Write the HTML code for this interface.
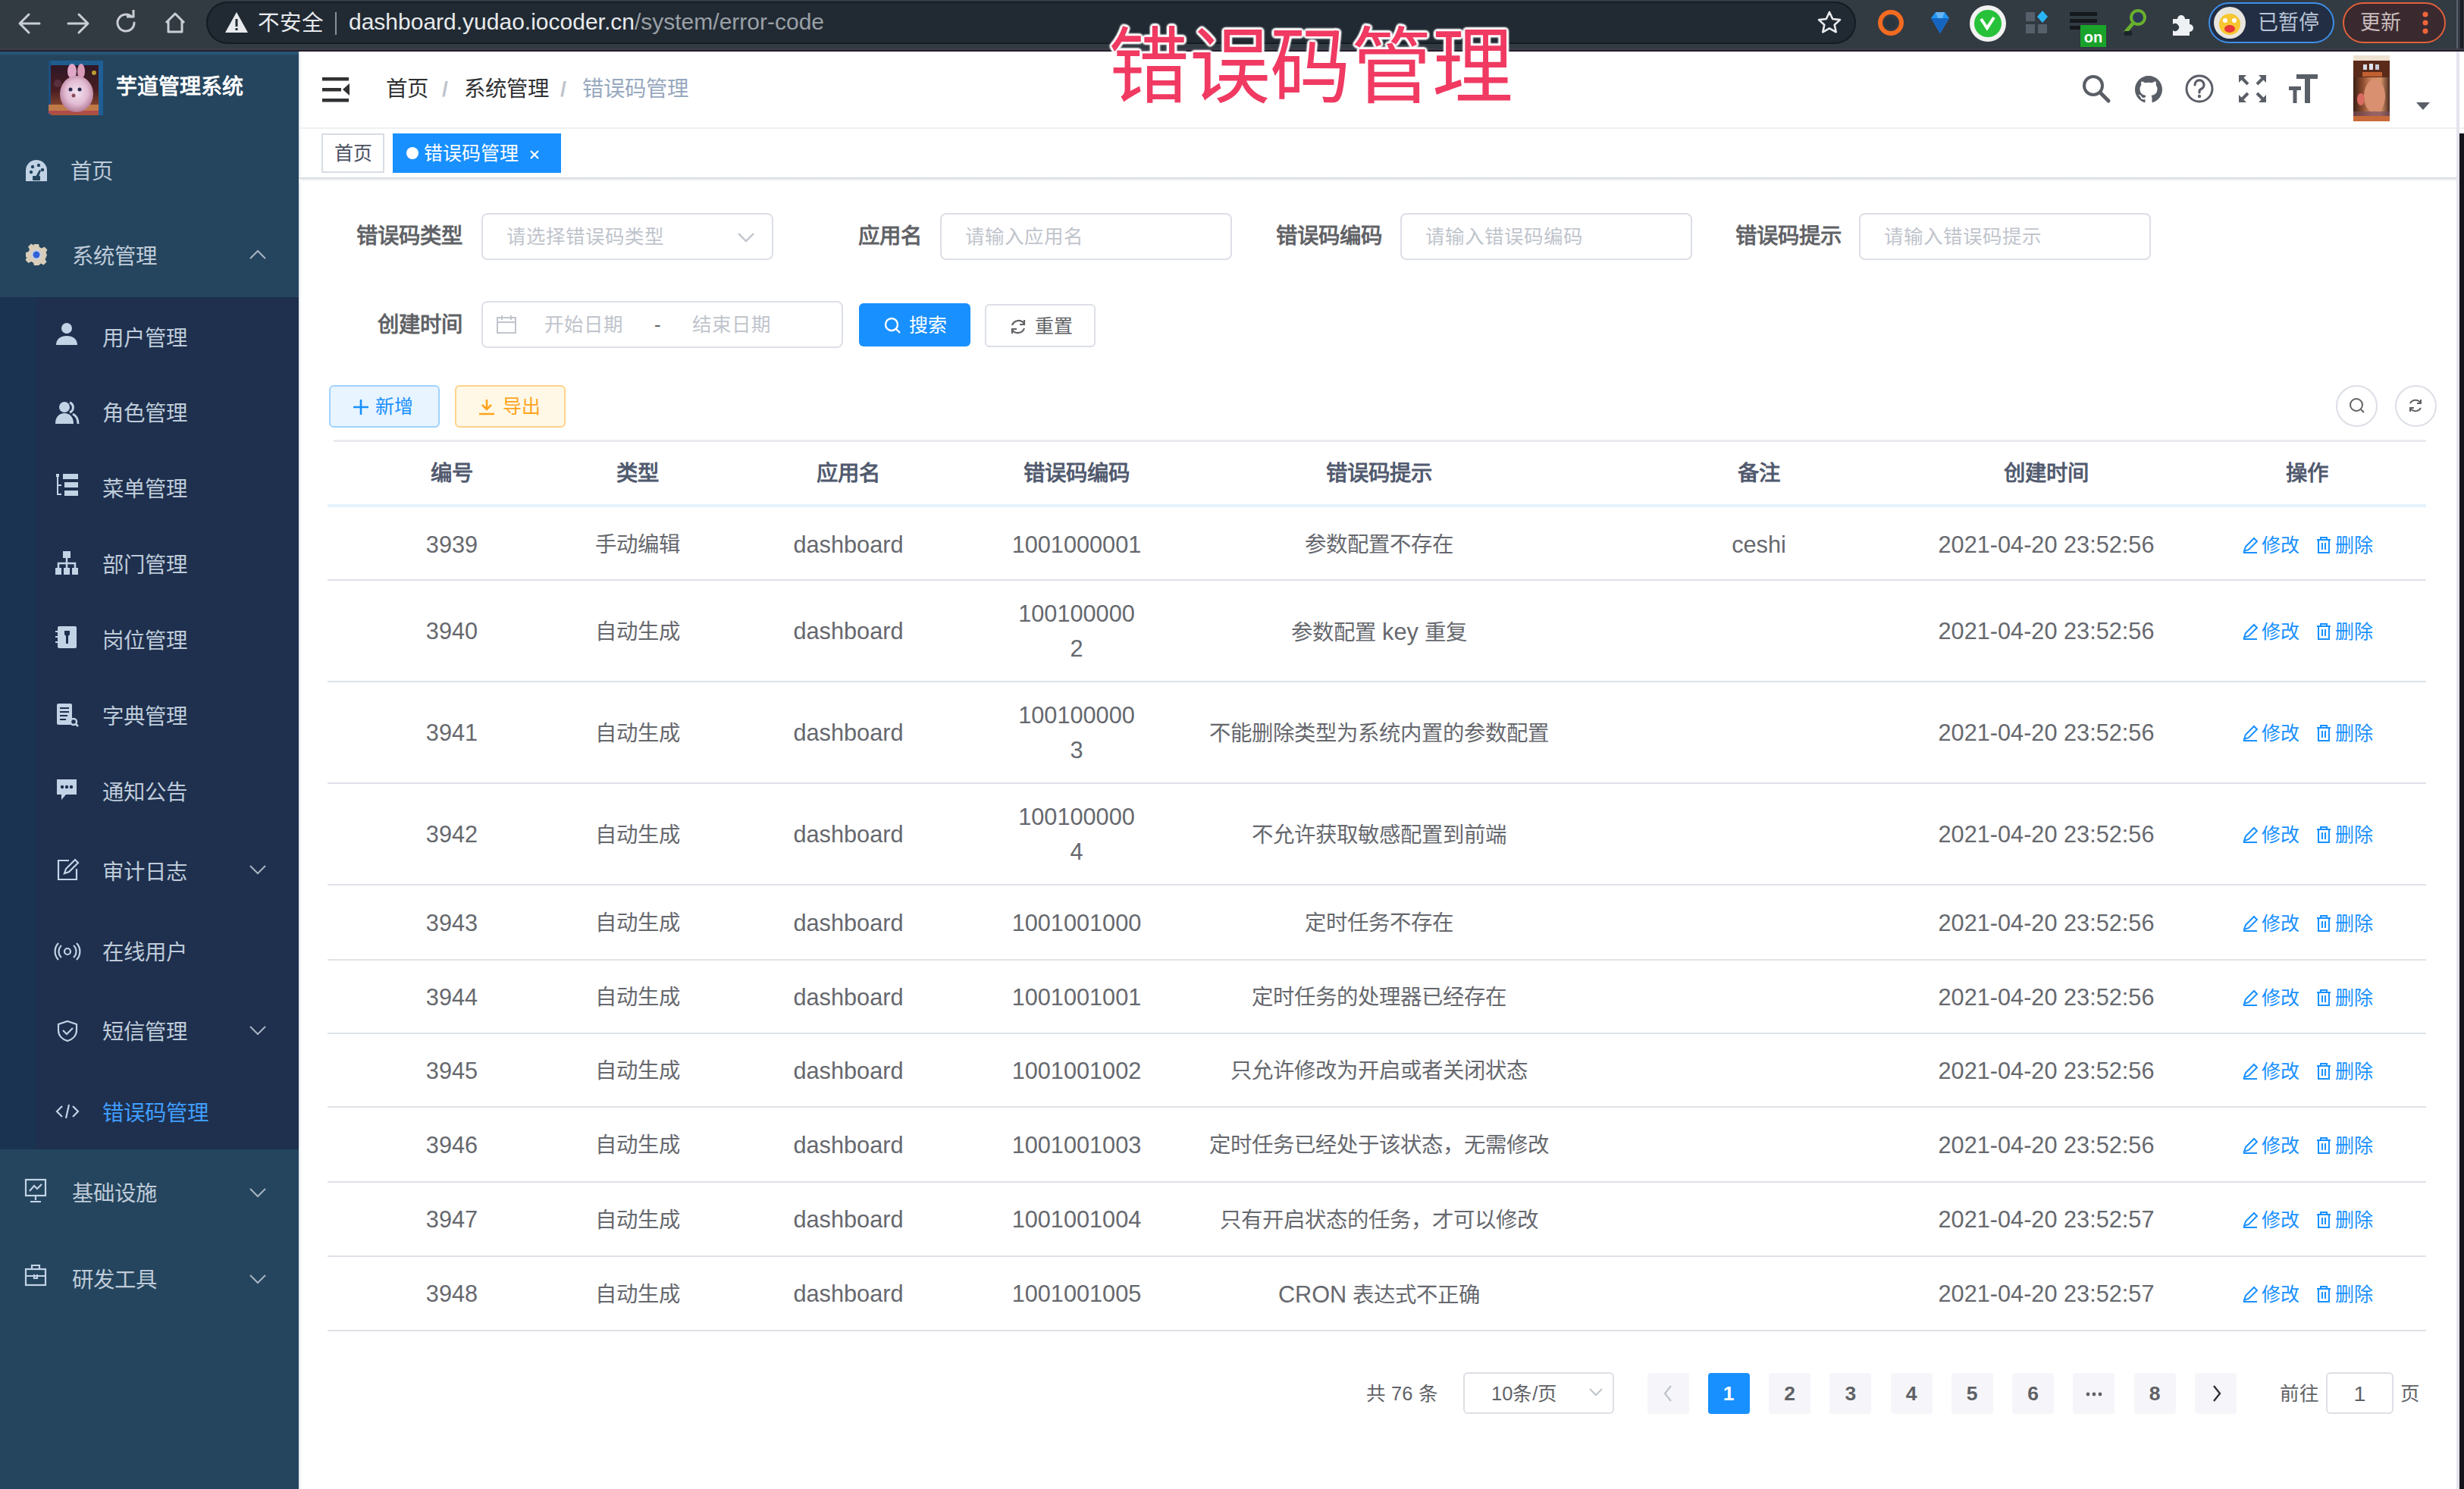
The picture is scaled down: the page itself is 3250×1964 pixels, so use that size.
<!DOCTYPE html>
<html lang="zh-CN"><head><meta charset="utf-8"><title>错误码管理</title>
<style>
html,body{margin:0;padding:0;}
body{width:3250px;height:1964px;position:relative;overflow:hidden;background:#fff;font-family:"Liberation Sans",sans-serif;}
.a{position:absolute;}
.t{white-space:nowrap;}
.l{font-size:30.7px;}
svg{overflow:visible}
</style></head><body>
<div class="a" style="left:0px;top:0px;width:3250px;height:65px;background:#323a42"></div>
<div class="a" style="left:0px;top:64px;width:3250px;height:2px;background:#3e3d4a"></div>
<div class="a" style="left:0px;top:66px;width:3250px;height:2px;background:#221f2a"></div>
<div class="a" style="left:272px;top:2px;width:2176px;height:56px;background:#212a33;border-radius:28px;box-shadow:inset 0 0 0 2px #151b21"></div>
<svg class="a" style="left:22px;top:14px;" width="34" height="34" viewBox="0 0 34 34"><path d="M30 17H5M16 5L4 17l12 12" stroke="#c9ced3" stroke-width="3" fill="none" stroke-linecap="round" stroke-linejoin="round"/></svg>
<svg class="a" style="left:86px;top:14px;" width="34" height="34" viewBox="0 0 34 34"><path d="M4 17h25M18 5l12 12-12 12" stroke="#c9ced3" stroke-width="3" fill="none" stroke-linecap="round" stroke-linejoin="round"/></svg>
<svg class="a" style="left:150px;top:13px;" width="34" height="34" viewBox="0 0 34 34"><path d="M27 17a11 11 0 1 1-3.5-8" stroke="#c9ced3" stroke-width="3" fill="none" stroke-linecap="round"/><path d="M17 6h9V-3" stroke="#c9ced3" stroke-width="3" fill="none" transform="translate(0 3)"/></svg>
<svg class="a" style="left:214px;top:13px;" width="34" height="34" viewBox="0 0 34 34"><path d="M5 17L17 5l12 12M8 14v15h18V14" stroke="#c9ced3" stroke-width="3" fill="none" stroke-linejoin="round"/></svg>
<svg class="a" style="left:296px;top:14px;" width="32" height="30" viewBox="0 0 32 30"><path d="M16 2L31 29H1z" fill="#e8eaed"/><rect x="14.5" y="11" width="3" height="10" fill="#212a33"/><rect x="14.5" y="23" width="3" height="3" fill="#212a33"/></svg>
<div class="a t" style="left:340.0px;top:8.5px;width:2000px;height:43px;line-height:43px;font-size:28.5px;color:#e8eaed;font-weight:400;text-align:left;">不安全</div>
<div class="a" style="left:442px;top:16px;width:2px;height:30px;background:#8a9096"></div>
<div class="a t" style="left:460.0px;top:5.5px;width:2000px;height:45px;line-height:45px;font-size:30px;color:#e8eaed;font-weight:400;text-align:left;">dashboard.yudao.iocoder.cn<span style="color:#9aa0a6">/system/error-code</span></div>
<svg class="a" style="left:2396px;top:13px;" width="34" height="34" viewBox="0 0 34 34"><path d="M17 3l4.2 9 9.8 1.1-7.3 6.6 2 9.6L17 24.4 8.3 29.3l2-9.6L3 13.1l9.8-1.1z" stroke="#e8eaed" stroke-width="2.6" fill="none" stroke-linejoin="round"/></svg>
<svg class="a" style="left:2474px;top:10px;" width="40" height="40" viewBox="0 0 40 40"><circle cx="20" cy="20" r="14" stroke="#f26b21" stroke-width="6" fill="none"/><circle cx="20" cy="20" r="8" fill="#2a3540"/></svg>
<svg class="a" style="left:2543px;top:13px;" width="32" height="34" viewBox="0 0 32 34"><path d="M4 11L10 3h12l6 8-12 20z" fill="#2196f3"/><path d="M4 11h24L16 31z" fill="#1565c0"/><path d="M10 3l3 8h6l3-8" fill="#64b5f6"/></svg>
<svg class="a" style="left:2596px;top:5px;" width="52" height="52" viewBox="0 0 52 52"><circle cx="26" cy="26" r="24" fill="#f2f2f2"/><circle cx="26" cy="26" r="18" fill="#27c23a"/><path d="M17 20l8 12 9-14" stroke="#fff" stroke-width="4" fill="none"/></svg>
<svg class="a" style="left:2670px;top:14px;" width="34" height="34" viewBox="0 0 34 34"><rect x="2" y="2" width="12" height="12" fill="#56606b"/><rect x="2" y="18" width="12" height="12" fill="#56606b"/><rect x="18" y="18" width="12" height="12" fill="#56606b"/><path d="M24 0l7 8-7 8-7-8z" fill="#29b6f6"/></svg>
<svg class="a" style="left:2728px;top:14px;" width="54" height="50" viewBox="0 0 54 50"><rect x="2" y="2" width="36" height="5" fill="#15191d"/><rect x="2" y="11" width="36" height="5" fill="#15191d"/><rect x="2" y="20" width="36" height="5" fill="#15191d"/><rect x="16" y="19" width="34" height="29" fill="#1aa32a"/><text x="33" y="42" font-size="20" font-family="Liberation Sans" font-weight="700" fill="#fff" text-anchor="middle">on</text></svg>
<svg class="a" style="left:2798px;top:11px;" width="36" height="38" viewBox="0 0 36 38"><circle cx="22" cy="12" r="9" stroke="#69b02d" stroke-width="4" fill="#2b3a55"/><path d="M16 19L5 32" stroke="#69b02d" stroke-width="5"/><rect x="4" y="30" width="10" height="6" fill="#1d2228"/></svg>
<svg class="a" style="left:2860px;top:13px;" width="36" height="36" viewBox="0 0 36 36"><path d="M6 12h6a5 5 0 1 1 10 0h6v7a5 5 0 1 1 0 10v5H6v-7a5 5 0 1 0 0-8z" fill="#eef1f4"/></svg>
<div class="a" style="left:2913px;top:3px;width:166px;height:54px;border:2.5px solid #3d8fe8;border-radius:29px;background:#222e44;box-sizing:border-box"></div>
<svg class="a" style="left:2919px;top:8px;" width="44" height="44" viewBox="0 0 44 44"><circle cx="22" cy="22" r="21" fill="#e9e6e0"/><circle cx="22" cy="24" r="14" fill="#f7c731"/><ellipse cx="22" cy="30" rx="7" ry="5" fill="#e8383a"/><circle cx="16" cy="19" r="3" fill="#fff"/><circle cx="28" cy="19" r="3" fill="#fff"/></svg>
<div class="a t" style="left:2978.0px;top:10.0px;width:2000px;height:40px;line-height:40px;font-size:27px;color:#b9c5d6;font-weight:400;text-align:left;">已暂停</div>
<div class="a" style="left:3090px;top:3px;width:136px;height:54px;border:2.5px solid #e2603a;border-radius:29px;background:#3a2a30;box-sizing:border-box"></div>
<div class="a t" style="left:3113.0px;top:10.0px;width:2000px;height:40px;line-height:40px;font-size:27px;color:#c9bcbc;font-weight:400;text-align:left;">更新</div>
<svg class="a" style="left:3192px;top:14px;" width="14" height="32" viewBox="0 0 14 32"><circle cx="7" cy="5" r="3.5" fill="#f0643a"/><circle cx="7" cy="16" r="3.5" fill="#f0643a"/><circle cx="7" cy="27" r="3.5" fill="#f0643a"/></svg>
<div class="a" style="left:0px;top:68px;width:394px;height:1896px;background:#25455e"></div>
<div class="a" style="left:0px;top:68px;width:394px;height:4px;background:#2a5478"></div>
<div class="a" style="left:0px;top:392px;width:394px;height:1124px;background:#1e304e"></div>
<div class="a" style="left:0px;top:392px;width:48px;height:1124px;background:#1a3350"></div>
<svg class="a" style="left:64px;top:80px;" width="72" height="72" viewBox="0 0 72 72"><defs><radialGradient id="bun" cx="50%" cy="45%" r="55%"><stop offset="0" stop-color="#f1e2f0"/><stop offset=".6" stop-color="#e3bcd3"/><stop offset="1" stop-color="#b47c98"/></radialGradient><linearGradient id="bg1" x1="0" y1="0" x2="0" y2="1"><stop offset="0" stop-color="#2a1626"/><stop offset=".55" stop-color="#4a1e22"/><stop offset="1" stop-color="#a85a34"/></linearGradient></defs><rect width="72" height="72" fill="url(#bg1)"/><rect width="72" height="6" fill="#1f5d8e"/><rect x="66" width="6" height="72" fill="#1e5f98"/><rect x="0" width="3" height="72" fill="#1e4f80"/><rect y="58" width="66" height="12" fill="#c07a48"/><rect y="66" width="66" height="4" fill="#b04a4a"/><ellipse cx="31" cy="14" rx="6" ry="10" fill="#e0a8c8"/><ellipse cx="43" cy="14" rx="5" ry="10" fill="#d79ab8"/><ellipse cx="37" cy="44" rx="22" ry="24" fill="url(#bun)"/><circle cx="29" cy="38" r="2.5" fill="#2a2a50"/><circle cx="41" cy="38" r="2.5" fill="#2a2a50"/><circle cx="33" cy="46" r="2.5" fill="#8a4a5a"/><circle cx="60" cy="16" r="3" fill="#b89a30"/><circle cx="12" cy="30" r="5" fill="#5a3040"/></svg>
<div class="a t" style="left:153.0px;top:93.5px;width:2000px;height:42px;line-height:42px;font-size:28px;color:#ffffff;font-weight:700;text-align:left;">芋道管理系统</div>
<svg class="a" style="left:33px;top:209.5px;" width="30" height="30" viewBox="0 0 30 30"><path d="M1 29V15A14 14 0 0 1 29 15V29z" fill="#c3d3e6"/><circle cx="8" cy="17" r="2.2" fill="#25455e"/><circle cx="10" cy="10" r="2.2" fill="#25455e"/><circle cx="18" cy="8" r="2.2" fill="#25455e"/><circle cx="23" cy="14" r="2.2" fill="#25455e"/><path d="M13 25l6-11 2 1-4 11z" fill="#25455e"/><rect x="10" y="22" width="10" height="6" rx="1" fill="#25455e"/></svg>
<svg class="a" style="left:33px;top:321px;" width="30" height="30" viewBox="0 0 30 30"><path d="M12 1h6l1 4 3 1.5 3.5-2 4 4-2 3.5L29 15l0 0v0l-1 3-1.5 3 2 3.5-4 4-3.5-2L18 29h-6l-1-3.5-3-1.5-3.5 2-4-4 2-3.5L1 18v-6l3.5-1 1.5-3-2-3.5 4-4 3.5 2L12 1z" fill="#d9cdb9"/><circle cx="15" cy="15" r="7" fill="#c8d0e0"/><circle cx="15" cy="15" r="4.5" fill="#2f62d8"/></svg>
<svg class="a" style="left:73px;top:425px;" width="30" height="30" viewBox="0 0 30 30"><circle cx="15" cy="8" r="7" fill="#c3d3e6"/><path d="M1 30c0-8 6-12 14-12s14 4 14 12z" fill="#c3d3e6"/></svg>
<svg class="a" style="left:73px;top:528px;" width="30" height="30" viewBox="0 0 30 30"><circle cx="12" cy="9" r="7" fill="#c3d3e6"/><path d="M0 31c0-9 5-14 12-14s12 5 12 14z" fill="#c3d3e6"/><path d="M19 3a7 7 0 0 1 0 13M23 18c4 2 7 6 7 13" stroke="#c3d3e6" stroke-width="3" fill="none"/></svg>
<svg class="a" style="left:73px;top:624px;" width="30" height="30" viewBox="0 0 30 30"><rect x="1" y="1" width="4" height="4" fill="#c3d3e6"/><path d="M3 5v23h5M3 16h5" stroke="#c3d3e6" stroke-width="2" fill="none"/><rect x="10" y="1" width="20" height="7" fill="#c3d3e6"/><rect x="12" y="12" width="18" height="7" fill="#c3d3e6"/><rect x="12" y="23" width="18" height="7" fill="#c3d3e6"/></svg>
<svg class="a" style="left:73px;top:727px;" width="30" height="30" viewBox="0 0 30 30"><rect x="10" y="0" width="10" height="9" fill="#c3d3e6"/><path d="M15 9v6M4 22v-6h22v6M15 15v7" stroke="#c3d3e6" stroke-width="2.5" fill="none"/><rect x="0" y="22" width="8" height="9" fill="#c3d3e6"/><rect x="11" y="22" width="8" height="9" fill="#c3d3e6"/><rect x="22" y="22" width="8" height="9" fill="#c3d3e6"/></svg>
<svg class="a" style="left:73px;top:825px;" width="30" height="30" viewBox="0 0 30 30"><rect x="3" y="1" width="25" height="29" rx="2" fill="#c3d3e6"/><path d="M12 7h7v5l-2 2v10h-3V14l-2-2z" fill="#1e304e"/><path d="M0 8h4M0 15h4M0 22h4" stroke="#c3d3e6" stroke-width="2"/></svg>
<svg class="a" style="left:73px;top:927px;" width="30" height="30" viewBox="0 0 30 30"><rect x="2" y="1" width="20" height="28" rx="2" fill="#c3d3e6"/><path d="M6 7h12M6 12h12M6 17h10M6 22h8" stroke="#1e304e" stroke-width="2"/><circle cx="24" cy="25" r="4" stroke="#c3d3e6" stroke-width="2.5" fill="#1e304e"/><path d="M27 28l3 3" stroke="#c3d3e6" stroke-width="2.5"/></svg>
<svg class="a" style="left:73px;top:1026px;" width="30" height="30" viewBox="0 0 30 30"><path d="M2 2h26v20H14l-6 7v-7H2z" fill="#c3d3e6"/><circle cx="9" cy="12" r="2.2" fill="#1e304e"/><circle cx="15" cy="12" r="2.2" fill="#1e304e"/><circle cx="21" cy="12" r="2.2" fill="#1e304e"/></svg>
<svg class="a" style="left:74px;top:1132px;" width="30" height="30" viewBox="0 0 30 30"><path d="M17 3H3v25h24V14" stroke="#c3d3e6" stroke-width="2.2" fill="none"/><path d="M11 20l2-6 12-12 4 4-12 12z" stroke="#c3d3e6" stroke-width="2.2" fill="none"/></svg>
<svg class="a" style="left:74px;top:1243px;" width="30" height="24" viewBox="0 0 30 24"><circle cx="15" cy="12" r="4" stroke="#c3d3e6" stroke-width="2.2" fill="none"/><path d="M7 4a11 11 0 0 0 0 16M23 4a11 11 0 0 1 0 16M3 1a16 16 0 0 0 0 22M27 1a16 16 0 0 1 0 22" stroke="#c3d3e6" stroke-width="2.2" fill="none"/></svg>
<svg class="a" style="left:74px;top:1345px;" width="30" height="30" viewBox="0 0 30 30"><path d="M15 2l12 4v8c0 7-5 12-12 14C8 26 3 21 3 14V6z" stroke="#c3d3e6" stroke-width="2.2" fill="none"/><path d="M9 14l5 5 8-8" stroke="#c3d3e6" stroke-width="2.2" fill="none"/></svg>
<svg class="a" style="left:74px;top:1456px;" width="30" height="20" viewBox="0 0 30 20"><path d="M8 3L1 10l7 7M22 3l7 7-7 7M17 1l-4 18" stroke="#c3d3e6" stroke-width="2.2" fill="none"/></svg>
<svg class="a" style="left:32px;top:1554px;" width="30" height="33" viewBox="0 0 30 33"><rect x="2" y="2" width="26" height="21" stroke="#c3d3e6" stroke-width="2.2" fill="none"/><path d="M7 17l6-7 4 4 6-6M15 23v6M8 31h14" stroke="#c3d3e6" stroke-width="2.2" fill="none"/></svg>
<svg class="a" style="left:32px;top:1666px;" width="30" height="31" viewBox="0 0 30 31"><rect x="2" y="8" width="26" height="21" stroke="#c3d3e6" stroke-width="2.2" fill="none"/><path d="M10 8V3h10v5M2 17h26M13 15v5h4v-5" stroke="#c3d3e6" stroke-width="2.2" fill="none"/></svg>
<div class="a t" style="left:92.5px;top:204.5px;width:2000px;height:43px;line-height:43px;font-size:28.4px;color:#bfcbd9;font-weight:400;text-align:left;">首页</div>
<div class="a t" style="left:94.5px;top:316.5px;width:2000px;height:43px;line-height:43px;font-size:28.4px;color:#bfcbd9;font-weight:400;text-align:left;">系统管理</div>
<div class="a t" style="left:134.5px;top:424.5px;width:2000px;height:43px;line-height:43px;font-size:28.4px;color:#bfcbd9;font-weight:400;text-align:left;">用户管理</div>
<div class="a t" style="left:134.5px;top:523.5px;width:2000px;height:43px;line-height:43px;font-size:28.4px;color:#bfcbd9;font-weight:400;text-align:left;">角色管理</div>
<div class="a t" style="left:134.5px;top:623.5px;width:2000px;height:43px;line-height:43px;font-size:28.4px;color:#bfcbd9;font-weight:400;text-align:left;">菜单管理</div>
<div class="a t" style="left:134.5px;top:723.5px;width:2000px;height:43px;line-height:43px;font-size:28.4px;color:#bfcbd9;font-weight:400;text-align:left;">部门管理</div>
<div class="a t" style="left:134.5px;top:823.5px;width:2000px;height:43px;line-height:43px;font-size:28.4px;color:#bfcbd9;font-weight:400;text-align:left;">岗位管理</div>
<div class="a t" style="left:134.5px;top:923.5px;width:2000px;height:43px;line-height:43px;font-size:28.4px;color:#bfcbd9;font-weight:400;text-align:left;">字典管理</div>
<div class="a t" style="left:134.5px;top:1023.5px;width:2000px;height:43px;line-height:43px;font-size:28.4px;color:#bfcbd9;font-weight:400;text-align:left;">通知公告</div>
<div class="a t" style="left:134.5px;top:1128.5px;width:2000px;height:43px;line-height:43px;font-size:28.4px;color:#bfcbd9;font-weight:400;text-align:left;">审计日志</div>
<div class="a t" style="left:134.5px;top:1234.5px;width:2000px;height:43px;line-height:43px;font-size:28.4px;color:#bfcbd9;font-weight:400;text-align:left;">在线用户</div>
<div class="a t" style="left:134.5px;top:1339.5px;width:2000px;height:43px;line-height:43px;font-size:28.4px;color:#bfcbd9;font-weight:400;text-align:left;">短信管理</div>
<div class="a t" style="left:134.5px;top:1446.5px;width:2000px;height:43px;line-height:43px;font-size:28.4px;color:#409eff;font-weight:400;text-align:left;">错误码管理</div>
<div class="a t" style="left:94.5px;top:1552.5px;width:2000px;height:43px;line-height:43px;font-size:28.4px;color:#bfcbd9;font-weight:400;text-align:left;">基础设施</div>
<div class="a t" style="left:94.5px;top:1666.5px;width:2000px;height:43px;line-height:43px;font-size:28.4px;color:#bfcbd9;font-weight:400;text-align:left;">研发工具</div>
<svg class="a" style="left:328px;top:329px;" width="24" height="14" viewBox="0 0 24 14"><path d="M2 12L12 2l10 10" stroke="#a9b4c2" stroke-width="2" fill="none"/></svg>
<svg class="a" style="left:328px;top:1140px;" width="24" height="14" viewBox="0 0 24 14"><path d="M2 2l10 10 10-10" stroke="#a9b4c2" stroke-width="2" fill="none"/></svg>
<svg class="a" style="left:328px;top:1352px;" width="24" height="14" viewBox="0 0 24 14"><path d="M2 2l10 10 10-10" stroke="#a9b4c2" stroke-width="2" fill="none"/></svg>
<svg class="a" style="left:328px;top:1566px;" width="24" height="14" viewBox="0 0 24 14"><path d="M2 2l10 10 10-10" stroke="#a9b4c2" stroke-width="2" fill="none"/></svg>
<svg class="a" style="left:328px;top:1680px;" width="24" height="14" viewBox="0 0 24 14"><path d="M2 2l10 10 10-10" stroke="#a9b4c2" stroke-width="2" fill="none"/></svg>
<div class="a" style="left:394px;top:68px;width:4px;height:1896px;background:linear-gradient(90deg,#e6e9ee,#fff)"></div>
<svg class="a" style="left:424px;top:101px;" width="40" height="36" viewBox="0 0 40 36"><rect x="1" y="1" width="35" height="4.5" fill="#303133"/><rect x="1" y="15" width="25" height="4.5" fill="#303133"/><rect x="1" y="29" width="35" height="4.5" fill="#303133"/><path d="M37 9v16l-9-8z" fill="#303133"/></svg>
<div class="a t" style="left:509.0px;top:95.5px;width:2000px;height:43px;line-height:43px;font-size:28.4px;color:#303133;font-weight:400;text-align:left;">首页</div>
<div class="a t" style="left:583.0px;top:95.5px;width:2000px;height:43px;line-height:43px;font-size:28.4px;color:#c0c4cc;font-weight:700;text-align:left;">/</div>
<div class="a t" style="left:612.0px;top:95.5px;width:2000px;height:43px;line-height:43px;font-size:28.4px;color:#303133;font-weight:400;text-align:left;">系统管理</div>
<div class="a t" style="left:739.0px;top:95.5px;width:2000px;height:43px;line-height:43px;font-size:28.4px;color:#c0c4cc;font-weight:700;text-align:left;">/</div>
<div class="a t" style="left:768.0px;top:95.5px;width:2000px;height:43px;line-height:43px;font-size:28.4px;color:#97a8be;font-weight:400;text-align:left;">错误码管理</div>
<div class="a" style="left:394px;top:168px;width:2856px;height:2px;background:#eef0f3"></div>
<svg class="a" style="left:2746px;top:98px;" width="40" height="40" viewBox="0 0 40 40"><circle cx="15" cy="15" r="12" stroke="#5a5e66" stroke-width="4" fill="none"/><path d="M24 24l11 11" stroke="#5a5e66" stroke-width="5" stroke-linecap="round"/></svg>
<svg class="a" style="left:2814px;top:98px;" width="40" height="40" viewBox="0 0 40 40"><path d="M20 2C10 2 2 10 2 20c0 8 5.2 14.8 12.3 17.1.9.2 1.2-.4 1.2-.9v-3.1c-5 1.1-6-2.4-6-2.4-.8-2.1-2-2.6-2-2.6-1.6-1.1.1-1.1.1-1.1 1.8.1 2.8 1.9 2.8 1.9 1.6 2.8 4.2 2 5.2 1.5.2-1.2.6-2 1.1-2.4-4-.5-8.2-2-8.2-8.9 0-2 .7-3.6 1.9-4.8-.2-.5-.8-2.3.2-4.8 0 0 1.5-.5 4.9 1.8 1.4-.4 3-.6 4.5-.6s3.1.2 4.5.6c3.4-2.3 4.9-1.8 4.9-1.8 1 2.5.4 4.3.2 4.8 1.2 1.3 1.9 2.9 1.9 4.8 0 6.9-4.2 8.4-8.2 8.9.6.6 1.2 1.7 1.2 3.3v4.9c0 .5.3 1.1 1.2.9C32.8 34.8 38 28 38 20 38 10 30 2 20 2z" fill="#5a5e66"/></svg>
<svg class="a" style="left:2881px;top:98px;" width="40" height="40" viewBox="0 0 40 40"><circle cx="20" cy="19" r="17" stroke="#5a5e66" stroke-width="3" fill="none"/><path d="M14 14a6 6 0 1 1 8 5.5c-1.5.8-2 1.8-2 3.5v1" stroke="#5a5e66" stroke-width="3.2" fill="none" stroke-linecap="round"/><circle cx="20" cy="29" r="2.2" fill="#5a5e66"/></svg>
<svg class="a" style="left:2950px;top:96px;" width="42" height="42" viewBox="0 0 42 42"><path d="M3 3h10L3 13zM39 3H29l10 10zM3 39h10L3 29zM39 39H29l10-10z" fill="#5a5e66"/><path d="M6 6l9 9M36 6l-9 9M6 36l9-9M36 36l-9-9" stroke="#5a5e66" stroke-width="4"/></svg>
<svg class="a" style="left:3017px;top:96px;" width="42" height="42" viewBox="0 0 42 42"><rect x="12" y="2" width="28" height="6" fill="#5a5e66"/><rect x="23" y="2" width="7" height="38" fill="#5a5e66"/><rect x="2" y="18" width="16" height="5" fill="#5a5e66"/><rect x="7.5" y="18" width="5" height="22" fill="#5a5e66"/></svg>
<svg class="a" style="left:3104px;top:73px;" width="48" height="87" viewBox="0 0 48 87"><defs><linearGradient id="fc" x1="0" x2="1"><stop offset="0" stop-color="#3a2016"/><stop offset=".25" stop-color="#8a4a2e"/><stop offset=".5" stop-color="#d28a62"/><stop offset=".75" stop-color="#d8956a"/><stop offset="1" stop-color="#4a2a20"/></linearGradient></defs><rect width="48" height="87" fill="url(#fc)"/><rect width="48" height="7" fill="#efe2d2"/><rect y="7" width="48" height="22" fill="#5a2a1a"/><rect x="13" y="12" width="5" height="7" fill="#d8dce8"/><rect x="21" y="11" width="5" height="8" fill="#e0e4ee"/><rect x="29" y="12" width="5" height="7" fill="#c8ccd8"/><rect x="12" y="22" width="26" height="6" fill="#c06030"/><ellipse cx="28" cy="54" rx="14" ry="22" fill="#d89070"/><ellipse cx="10" cy="58" rx="5" ry="8" fill="#d86a60"/><rect y="74" width="48" height="8" fill="#7a5060" opacity=".7"/><rect y="80" width="48" height="7" fill="#c86a3a"/></svg>
<svg class="a" style="left:3186px;top:134px;" width="20" height="12" viewBox="0 0 20 12"><path d="M1 1h18L10 11z" fill="#5a5e66"/></svg>
<div class="a" style="left:424px;top:176px;width:83px;height:52px;border:2px solid #d8dce5;background:#fff;box-sizing:border-box"></div>
<div class="a t" style="left:365.5px;top:183.0px;width:200px;height:38px;line-height:38px;font-size:25px;color:#495060;font-weight:400;text-align:center;">首页</div>
<div class="a" style="left:518px;top:176px;width:222px;height:52px;background:#1890ff;border:2px solid #1890ff;box-sizing:border-box"></div>
<div class="a" style="left:536px;top:194px;width:16px;height:16px;background:#fff;border-radius:50%"></div>
<div class="a t" style="left:559.0px;top:183.0px;width:2000px;height:38px;line-height:38px;font-size:25px;color:#fff;font-weight:400;text-align:left;">错误码管理</div>
<svg class="a" style="left:697px;top:196px;" width="16" height="16" viewBox="0 0 16 16"><path d="M3 3l10 10M13 3L3 13" stroke="#fff" stroke-width="2.2"/></svg>
<div class="a" style="left:394px;top:234px;width:2856px;height:2px;background:#d8dce5"></div>
<div class="a" style="left:394px;top:236px;width:2856px;height:4px;background:linear-gradient(#eceef3,#fff)"></div>
<div class="a t" style="left:209.5px;top:289.5px;width:400px;height:43px;line-height:43px;font-size:28.4px;color:#606266;font-weight:700;text-align:right;">错误码类型</div>
<div class="a" style="left:635px;top:281px;width:385px;height:62px;border:2px solid #dcdfe6;border-radius:8px;background:#fff;box-sizing:border-box"></div>
<div class="a t" style="left:668.0px;top:293.0px;width:2000px;height:38px;line-height:38px;font-size:25.5px;color:#c0c4cc;font-weight:400;text-align:left;">请选择错误码类型</div>
<div class="a t" style="left:815.5px;top:289.5px;width:400px;height:43px;line-height:43px;font-size:28.4px;color:#606266;font-weight:700;text-align:right;">应用名</div>
<div class="a" style="left:1240px;top:281px;width:385px;height:62px;border:2px solid #dcdfe6;border-radius:8px;background:#fff;box-sizing:border-box"></div>
<div class="a t" style="left:1273.0px;top:293.0px;width:2000px;height:38px;line-height:38px;font-size:25.5px;color:#c0c4cc;font-weight:400;text-align:left;">请输入应用名</div>
<div class="a t" style="left:1422.5px;top:289.5px;width:400px;height:43px;line-height:43px;font-size:28.4px;color:#606266;font-weight:700;text-align:right;">错误码编码</div>
<div class="a" style="left:1847px;top:281px;width:385px;height:62px;border:2px solid #dcdfe6;border-radius:8px;background:#fff;box-sizing:border-box"></div>
<div class="a t" style="left:1880.0px;top:293.0px;width:2000px;height:38px;line-height:38px;font-size:25.5px;color:#c0c4cc;font-weight:400;text-align:left;">请输入错误码编码</div>
<div class="a t" style="left:2028.5px;top:289.5px;width:400px;height:43px;line-height:43px;font-size:28.4px;color:#606266;font-weight:700;text-align:right;">错误码提示</div>
<div class="a" style="left:2452px;top:281px;width:385px;height:62px;border:2px solid #dcdfe6;border-radius:8px;background:#fff;box-sizing:border-box"></div>
<div class="a t" style="left:2485.0px;top:293.0px;width:2000px;height:38px;line-height:38px;font-size:25.5px;color:#c0c4cc;font-weight:400;text-align:left;">请输入错误码提示</div>
<svg class="a" style="left:972px;top:305px;" width="24" height="16" viewBox="0 0 24 16"><path d="M2 3l10 10 10-10" stroke="#c0c4cc" stroke-width="2.4" fill="none"/></svg>
<div class="a t" style="left:209.5px;top:406.5px;width:400px;height:43px;line-height:43px;font-size:28.4px;color:#606266;font-weight:700;text-align:right;">创建时间</div>
<div class="a" style="left:635px;top:397px;width:477px;height:62px;border:2px solid #dcdfe6;border-radius:8px;background:#fff;box-sizing:border-box"></div>
<svg class="a" style="left:654px;top:415px;" width="28" height="26" viewBox="0 0 28 26"><rect x="2" y="4" width="24" height="20" stroke="#c0c4cc" stroke-width="2" fill="none"/><path d="M2 10h24M8 1v6M20 1v6" stroke="#c0c4cc" stroke-width="2"/></svg>
<div class="a t" style="left:718.0px;top:409.0px;width:2000px;height:38px;line-height:38px;font-size:25.5px;color:#c0c4cc;font-weight:400;text-align:left;">开始日期</div>
<div class="a t" style="left:863.0px;top:409.0px;width:2000px;height:38px;line-height:38px;font-size:25.5px;color:#606266;font-weight:400;text-align:left;">-</div>
<div class="a t" style="left:913.0px;top:409.0px;width:2000px;height:38px;line-height:38px;font-size:25.5px;color:#c0c4cc;font-weight:400;text-align:left;">结束日期</div>
<div class="a" style="left:1133px;top:400px;width:147px;height:57px;background:#1890ff;border-radius:6px"></div>
<svg class="a" style="left:1166px;top:418px;" width="24" height="24" viewBox="0 0 24 24"><circle cx="10" cy="10" r="8" stroke="#fff" stroke-width="2.4" fill="none"/><path d="M16 16l5 5" stroke="#fff" stroke-width="2.4"/></svg>
<div class="a t" style="left:1199.0px;top:410.0px;width:2000px;height:38px;line-height:38px;font-size:25px;color:#fff;font-weight:400;text-align:left;">搜索</div>
<div class="a" style="left:1299px;top:401px;width:146px;height:57px;border:2px solid #dcdfe6;border-radius:6px;background:#fff;box-sizing:border-box"></div>
<svg class="a" style="left:1331px;top:419px;" width="24" height="24" viewBox="0 0 24 24"><path d="M20 8A9 9 0 0 0 4 10M4 16a9 9 0 0 0 16 -2" stroke="#606266" stroke-width="2.2" fill="none"/><path d="M20 3v6h-6M4 21v-6h6" stroke="#606266" stroke-width="2.2" fill="none"/></svg>
<div class="a t" style="left:1365.0px;top:411.0px;width:2000px;height:38px;line-height:38px;font-size:25px;color:#606266;font-weight:400;text-align:left;">重置</div>
<div class="a" style="left:434px;top:508px;width:146px;height:56px;border:2px solid #9fd3ff;background:#e8f4ff;border-radius:6px;box-sizing:border-box"></div>
<svg class="a" style="left:464px;top:525px;" width="24" height="24" viewBox="0 0 24 24"><path d="M12 2v20M2 12h20" stroke="#1890ff" stroke-width="2.6"/></svg>
<div class="a t" style="left:495.0px;top:517.0px;width:2000px;height:38px;line-height:38px;font-size:25px;color:#1890ff;font-weight:400;text-align:left;">新增</div>
<div class="a" style="left:600px;top:508px;width:146px;height:56px;border:2px solid #ffd28a;background:#fff8e6;border-radius:6px;box-sizing:border-box"></div>
<svg class="a" style="left:629px;top:524px;" width="26" height="26" viewBox="0 0 26 26"><path d="M13 3v12M7 10l6 6 6-6M3 22h20" stroke="#ffa41c" stroke-width="2.6" fill="none"/></svg>
<div class="a t" style="left:663.0px;top:517.0px;width:2000px;height:38px;line-height:38px;font-size:25px;color:#ffa41c;font-weight:400;text-align:left;">导出</div>
<div class="a" style="left:3081px;top:508px;width:55px;height:55px;border:2px solid #dcdfe6;border-radius:50%;box-sizing:border-box;background:#fff"></div>
<svg class="a" style="left:3097px;top:523px;" width="24" height="24" viewBox="0 0 24 24"><circle cx="11" cy="11" r="8" stroke="#606266" stroke-width="2" fill="none"/><path d="M17 17l4 4" stroke="#606266" stroke-width="2"/></svg>
<div class="a" style="left:3159px;top:508px;width:55px;height:55px;border:2px solid #dcdfe6;border-radius:50%;box-sizing:border-box;background:#fff"></div>
<svg class="a" style="left:3174px;top:523px;" width="24" height="24" viewBox="0 0 24 24"><path d="M19 9A8 8 0 0 0 5 9M5 15a8 8 0 0 0 14 0" stroke="#606266" stroke-width="2" fill="none"/><path d="M19 4v5h-5M5 20v-5h5" stroke="#606266" stroke-width="2" fill="none"/></svg>
<div class="a" style="left:440px;top:580px;width:2760px;height:3px;background:#e9ebef"></div>
<div class="a" style="left:432px;top:665px;width:2768px;height:4px;background:#e6f2fd"></div>
<div class="a t" style="left:396.0px;top:602.5px;width:400px;height:43px;line-height:43px;font-size:28.4px;color:#515a6e;font-weight:700;text-align:center;">编号</div>
<div class="a t" style="left:640.5px;top:602.5px;width:400px;height:43px;line-height:43px;font-size:28.4px;color:#515a6e;font-weight:700;text-align:center;">类型</div>
<div class="a t" style="left:919.0px;top:602.5px;width:400px;height:43px;line-height:43px;font-size:28.4px;color:#515a6e;font-weight:700;text-align:center;">应用名</div>
<div class="a t" style="left:1220.0px;top:602.5px;width:400px;height:43px;line-height:43px;font-size:28.4px;color:#515a6e;font-weight:700;text-align:center;">错误码编码</div>
<div class="a t" style="left:1619.0px;top:602.5px;width:400px;height:43px;line-height:43px;font-size:28.4px;color:#515a6e;font-weight:700;text-align:center;">错误码提示</div>
<div class="a t" style="left:2120.0px;top:602.5px;width:400px;height:43px;line-height:43px;font-size:28.4px;color:#515a6e;font-weight:700;text-align:center;">备注</div>
<div class="a t" style="left:2499.0px;top:602.5px;width:400px;height:43px;line-height:43px;font-size:28.4px;color:#515a6e;font-weight:700;text-align:center;">创建时间</div>
<div class="a t" style="left:2843.0px;top:602.5px;width:400px;height:43px;line-height:43px;font-size:28.4px;color:#515a6e;font-weight:700;text-align:center;">操作</div>
<div class="a" style="left:432px;top:764px;width:2768px;height:2px;background:#dfe2e8"></div>
<div class="a t" style="left:446.0px;top:695.5px;width:300px;height:46px;line-height:46px;font-size:30.7px;color:#66686e;font-weight:400;text-align:center;">3939</div>
<div class="a t" style="left:690.5px;top:697.0px;width:300px;height:43px;line-height:43px;font-size:28.4px;color:#66686e;font-weight:400;text-align:center;">手动编辑</div>
<div class="a t" style="left:969.0px;top:695.5px;width:300px;height:46px;line-height:46px;font-size:30.7px;color:#66686e;font-weight:400;text-align:center;">dashboard</div>
<div class="a t" style="left:1270.0px;top:695.5px;width:300px;height:46px;line-height:46px;font-size:30.7px;color:#66686e;font-weight:400;text-align:center;">1001000001</div>
<div class="a t" style="left:1419.0px;top:697.0px;width:800px;height:43px;line-height:43px;font-size:28.4px;color:#66686e;font-weight:400;text-align:center;">参数配置不存在</div>
<div class="a t" style="left:2170.0px;top:695.5px;width:300px;height:46px;line-height:46px;font-size:30.7px;color:#66686e;font-weight:400;text-align:center;">ceshi</div>
<div class="a t" style="left:2499.0px;top:695.5px;width:400px;height:46px;line-height:46px;font-size:30.7px;color:#66686e;font-weight:400;text-align:center;">2021-04-20 23:52:56</div>
<svg class="a" style="left:2956px;top:706.5px;" width="24" height="24" viewBox="0 0 24 24"><path d="M4 20l2-6L17 3l4 4L10 18z" stroke="#1890ff" stroke-width="2" fill="none"/><path d="M3 22h18" stroke="#1890ff" stroke-width="2"/></svg>
<div class="a t" style="left:2983.0px;top:699.5px;width:2000px;height:38px;line-height:38px;font-size:25px;color:#1890ff;font-weight:400;text-align:left;">修改</div>
<svg class="a" style="left:3054px;top:706.5px;" width="22" height="24" viewBox="0 0 22 24"><path d="M2 5h18M7 5V2h8v3M4 5v17h14V5M9 9v9M13 9v9" stroke="#1890ff" stroke-width="2" fill="none"/></svg>
<div class="a t" style="left:3080.0px;top:699.5px;width:2000px;height:38px;line-height:38px;font-size:25px;color:#1890ff;font-weight:400;text-align:left;">删除</div>
<div class="a" style="left:432px;top:898px;width:2768px;height:2px;background:#dfe2e8"></div>
<div class="a t" style="left:446.0px;top:810.0px;width:300px;height:46px;line-height:46px;font-size:30.7px;color:#66686e;font-weight:400;text-align:center;">3940</div>
<div class="a t" style="left:690.5px;top:811.5px;width:300px;height:43px;line-height:43px;font-size:28.4px;color:#66686e;font-weight:400;text-align:center;">自动生成</div>
<div class="a t" style="left:969.0px;top:810.0px;width:300px;height:46px;line-height:46px;font-size:30.7px;color:#66686e;font-weight:400;text-align:center;">dashboard</div>
<div class="a t" style="left:1270px;top:787.0px;width:300px;height:92px;line-height:46px;font-size:30.7px;color:#66686e;text-align:center">100100000<br>2</div>
<div class="a t" style="left:1419.0px;top:811.5px;width:800px;height:43px;line-height:43px;font-size:28.4px;color:#66686e;font-weight:400;text-align:center;">参数配置 <span class=l>key</span> 重复</div>
<div class="a t" style="left:2499.0px;top:810.0px;width:400px;height:46px;line-height:46px;font-size:30.7px;color:#66686e;font-weight:400;text-align:center;">2021-04-20 23:52:56</div>
<svg class="a" style="left:2956px;top:821.0px;" width="24" height="24" viewBox="0 0 24 24"><path d="M4 20l2-6L17 3l4 4L10 18z" stroke="#1890ff" stroke-width="2" fill="none"/><path d="M3 22h18" stroke="#1890ff" stroke-width="2"/></svg>
<div class="a t" style="left:2983.0px;top:814.0px;width:2000px;height:38px;line-height:38px;font-size:25px;color:#1890ff;font-weight:400;text-align:left;">修改</div>
<svg class="a" style="left:3054px;top:821.0px;" width="22" height="24" viewBox="0 0 22 24"><path d="M2 5h18M7 5V2h8v3M4 5v17h14V5M9 9v9M13 9v9" stroke="#1890ff" stroke-width="2" fill="none"/></svg>
<div class="a t" style="left:3080.0px;top:814.0px;width:2000px;height:38px;line-height:38px;font-size:25px;color:#1890ff;font-weight:400;text-align:left;">删除</div>
<div class="a" style="left:432px;top:1032px;width:2768px;height:2px;background:#dfe2e8"></div>
<div class="a t" style="left:446.0px;top:944.0px;width:300px;height:46px;line-height:46px;font-size:30.7px;color:#66686e;font-weight:400;text-align:center;">3941</div>
<div class="a t" style="left:690.5px;top:945.5px;width:300px;height:43px;line-height:43px;font-size:28.4px;color:#66686e;font-weight:400;text-align:center;">自动生成</div>
<div class="a t" style="left:969.0px;top:944.0px;width:300px;height:46px;line-height:46px;font-size:30.7px;color:#66686e;font-weight:400;text-align:center;">dashboard</div>
<div class="a t" style="left:1270px;top:921.0px;width:300px;height:92px;line-height:46px;font-size:30.7px;color:#66686e;text-align:center">100100000<br>3</div>
<div class="a t" style="left:1419.0px;top:945.5px;width:800px;height:43px;line-height:43px;font-size:28.4px;color:#66686e;font-weight:400;text-align:center;">不能删除类型为系统内置的参数配置</div>
<div class="a t" style="left:2499.0px;top:944.0px;width:400px;height:46px;line-height:46px;font-size:30.7px;color:#66686e;font-weight:400;text-align:center;">2021-04-20 23:52:56</div>
<svg class="a" style="left:2956px;top:955.0px;" width="24" height="24" viewBox="0 0 24 24"><path d="M4 20l2-6L17 3l4 4L10 18z" stroke="#1890ff" stroke-width="2" fill="none"/><path d="M3 22h18" stroke="#1890ff" stroke-width="2"/></svg>
<div class="a t" style="left:2983.0px;top:948.0px;width:2000px;height:38px;line-height:38px;font-size:25px;color:#1890ff;font-weight:400;text-align:left;">修改</div>
<svg class="a" style="left:3054px;top:955.0px;" width="22" height="24" viewBox="0 0 22 24"><path d="M2 5h18M7 5V2h8v3M4 5v17h14V5M9 9v9M13 9v9" stroke="#1890ff" stroke-width="2" fill="none"/></svg>
<div class="a t" style="left:3080.0px;top:948.0px;width:2000px;height:38px;line-height:38px;font-size:25px;color:#1890ff;font-weight:400;text-align:left;">删除</div>
<div class="a" style="left:432px;top:1166px;width:2768px;height:2px;background:#dfe2e8"></div>
<div class="a t" style="left:446.0px;top:1078.0px;width:300px;height:46px;line-height:46px;font-size:30.7px;color:#66686e;font-weight:400;text-align:center;">3942</div>
<div class="a t" style="left:690.5px;top:1079.5px;width:300px;height:43px;line-height:43px;font-size:28.4px;color:#66686e;font-weight:400;text-align:center;">自动生成</div>
<div class="a t" style="left:969.0px;top:1078.0px;width:300px;height:46px;line-height:46px;font-size:30.7px;color:#66686e;font-weight:400;text-align:center;">dashboard</div>
<div class="a t" style="left:1270px;top:1055.0px;width:300px;height:92px;line-height:46px;font-size:30.7px;color:#66686e;text-align:center">100100000<br>4</div>
<div class="a t" style="left:1419.0px;top:1079.5px;width:800px;height:43px;line-height:43px;font-size:28.4px;color:#66686e;font-weight:400;text-align:center;">不允许获取敏感配置到前端</div>
<div class="a t" style="left:2499.0px;top:1078.0px;width:400px;height:46px;line-height:46px;font-size:30.7px;color:#66686e;font-weight:400;text-align:center;">2021-04-20 23:52:56</div>
<svg class="a" style="left:2956px;top:1089.0px;" width="24" height="24" viewBox="0 0 24 24"><path d="M4 20l2-6L17 3l4 4L10 18z" stroke="#1890ff" stroke-width="2" fill="none"/><path d="M3 22h18" stroke="#1890ff" stroke-width="2"/></svg>
<div class="a t" style="left:2983.0px;top:1082.0px;width:2000px;height:38px;line-height:38px;font-size:25px;color:#1890ff;font-weight:400;text-align:left;">修改</div>
<svg class="a" style="left:3054px;top:1089.0px;" width="22" height="24" viewBox="0 0 22 24"><path d="M2 5h18M7 5V2h8v3M4 5v17h14V5M9 9v9M13 9v9" stroke="#1890ff" stroke-width="2" fill="none"/></svg>
<div class="a t" style="left:3080.0px;top:1082.0px;width:2000px;height:38px;line-height:38px;font-size:25px;color:#1890ff;font-weight:400;text-align:left;">删除</div>
<div class="a" style="left:432px;top:1265px;width:2768px;height:2px;background:#dfe2e8"></div>
<div class="a t" style="left:446.0px;top:1194.5px;width:300px;height:46px;line-height:46px;font-size:30.7px;color:#66686e;font-weight:400;text-align:center;">3943</div>
<div class="a t" style="left:690.5px;top:1196.0px;width:300px;height:43px;line-height:43px;font-size:28.4px;color:#66686e;font-weight:400;text-align:center;">自动生成</div>
<div class="a t" style="left:969.0px;top:1194.5px;width:300px;height:46px;line-height:46px;font-size:30.7px;color:#66686e;font-weight:400;text-align:center;">dashboard</div>
<div class="a t" style="left:1270.0px;top:1194.5px;width:300px;height:46px;line-height:46px;font-size:30.7px;color:#66686e;font-weight:400;text-align:center;">1001001000</div>
<div class="a t" style="left:1419.0px;top:1196.0px;width:800px;height:43px;line-height:43px;font-size:28.4px;color:#66686e;font-weight:400;text-align:center;">定时任务不存在</div>
<div class="a t" style="left:2499.0px;top:1194.5px;width:400px;height:46px;line-height:46px;font-size:30.7px;color:#66686e;font-weight:400;text-align:center;">2021-04-20 23:52:56</div>
<svg class="a" style="left:2956px;top:1205.5px;" width="24" height="24" viewBox="0 0 24 24"><path d="M4 20l2-6L17 3l4 4L10 18z" stroke="#1890ff" stroke-width="2" fill="none"/><path d="M3 22h18" stroke="#1890ff" stroke-width="2"/></svg>
<div class="a t" style="left:2983.0px;top:1198.5px;width:2000px;height:38px;line-height:38px;font-size:25px;color:#1890ff;font-weight:400;text-align:left;">修改</div>
<svg class="a" style="left:3054px;top:1205.5px;" width="22" height="24" viewBox="0 0 22 24"><path d="M2 5h18M7 5V2h8v3M4 5v17h14V5M9 9v9M13 9v9" stroke="#1890ff" stroke-width="2" fill="none"/></svg>
<div class="a t" style="left:3080.0px;top:1198.5px;width:2000px;height:38px;line-height:38px;font-size:25px;color:#1890ff;font-weight:400;text-align:left;">删除</div>
<div class="a" style="left:432px;top:1362px;width:2768px;height:2px;background:#dfe2e8"></div>
<div class="a t" style="left:446.0px;top:1292.5px;width:300px;height:46px;line-height:46px;font-size:30.7px;color:#66686e;font-weight:400;text-align:center;">3944</div>
<div class="a t" style="left:690.5px;top:1294.0px;width:300px;height:43px;line-height:43px;font-size:28.4px;color:#66686e;font-weight:400;text-align:center;">自动生成</div>
<div class="a t" style="left:969.0px;top:1292.5px;width:300px;height:46px;line-height:46px;font-size:30.7px;color:#66686e;font-weight:400;text-align:center;">dashboard</div>
<div class="a t" style="left:1270.0px;top:1292.5px;width:300px;height:46px;line-height:46px;font-size:30.7px;color:#66686e;font-weight:400;text-align:center;">1001001001</div>
<div class="a t" style="left:1419.0px;top:1294.0px;width:800px;height:43px;line-height:43px;font-size:28.4px;color:#66686e;font-weight:400;text-align:center;">定时任务的处理器已经存在</div>
<div class="a t" style="left:2499.0px;top:1292.5px;width:400px;height:46px;line-height:46px;font-size:30.7px;color:#66686e;font-weight:400;text-align:center;">2021-04-20 23:52:56</div>
<svg class="a" style="left:2956px;top:1303.5px;" width="24" height="24" viewBox="0 0 24 24"><path d="M4 20l2-6L17 3l4 4L10 18z" stroke="#1890ff" stroke-width="2" fill="none"/><path d="M3 22h18" stroke="#1890ff" stroke-width="2"/></svg>
<div class="a t" style="left:2983.0px;top:1296.5px;width:2000px;height:38px;line-height:38px;font-size:25px;color:#1890ff;font-weight:400;text-align:left;">修改</div>
<svg class="a" style="left:3054px;top:1303.5px;" width="22" height="24" viewBox="0 0 22 24"><path d="M2 5h18M7 5V2h8v3M4 5v17h14V5M9 9v9M13 9v9" stroke="#1890ff" stroke-width="2" fill="none"/></svg>
<div class="a t" style="left:3080.0px;top:1296.5px;width:2000px;height:38px;line-height:38px;font-size:25px;color:#1890ff;font-weight:400;text-align:left;">删除</div>
<div class="a" style="left:432px;top:1459px;width:2768px;height:2px;background:#dfe2e8"></div>
<div class="a t" style="left:446.0px;top:1389.5px;width:300px;height:46px;line-height:46px;font-size:30.7px;color:#66686e;font-weight:400;text-align:center;">3945</div>
<div class="a t" style="left:690.5px;top:1391.0px;width:300px;height:43px;line-height:43px;font-size:28.4px;color:#66686e;font-weight:400;text-align:center;">自动生成</div>
<div class="a t" style="left:969.0px;top:1389.5px;width:300px;height:46px;line-height:46px;font-size:30.7px;color:#66686e;font-weight:400;text-align:center;">dashboard</div>
<div class="a t" style="left:1270.0px;top:1389.5px;width:300px;height:46px;line-height:46px;font-size:30.7px;color:#66686e;font-weight:400;text-align:center;">1001001002</div>
<div class="a t" style="left:1419.0px;top:1391.0px;width:800px;height:43px;line-height:43px;font-size:28.4px;color:#66686e;font-weight:400;text-align:center;">只允许修改为开启或者关闭状态</div>
<div class="a t" style="left:2499.0px;top:1389.5px;width:400px;height:46px;line-height:46px;font-size:30.7px;color:#66686e;font-weight:400;text-align:center;">2021-04-20 23:52:56</div>
<svg class="a" style="left:2956px;top:1400.5px;" width="24" height="24" viewBox="0 0 24 24"><path d="M4 20l2-6L17 3l4 4L10 18z" stroke="#1890ff" stroke-width="2" fill="none"/><path d="M3 22h18" stroke="#1890ff" stroke-width="2"/></svg>
<div class="a t" style="left:2983.0px;top:1393.5px;width:2000px;height:38px;line-height:38px;font-size:25px;color:#1890ff;font-weight:400;text-align:left;">修改</div>
<svg class="a" style="left:3054px;top:1400.5px;" width="22" height="24" viewBox="0 0 22 24"><path d="M2 5h18M7 5V2h8v3M4 5v17h14V5M9 9v9M13 9v9" stroke="#1890ff" stroke-width="2" fill="none"/></svg>
<div class="a t" style="left:3080.0px;top:1393.5px;width:2000px;height:38px;line-height:38px;font-size:25px;color:#1890ff;font-weight:400;text-align:left;">删除</div>
<div class="a" style="left:432px;top:1558px;width:2768px;height:2px;background:#dfe2e8"></div>
<div class="a t" style="left:446.0px;top:1487.5px;width:300px;height:46px;line-height:46px;font-size:30.7px;color:#66686e;font-weight:400;text-align:center;">3946</div>
<div class="a t" style="left:690.5px;top:1489.0px;width:300px;height:43px;line-height:43px;font-size:28.4px;color:#66686e;font-weight:400;text-align:center;">自动生成</div>
<div class="a t" style="left:969.0px;top:1487.5px;width:300px;height:46px;line-height:46px;font-size:30.7px;color:#66686e;font-weight:400;text-align:center;">dashboard</div>
<div class="a t" style="left:1270.0px;top:1487.5px;width:300px;height:46px;line-height:46px;font-size:30.7px;color:#66686e;font-weight:400;text-align:center;">1001001003</div>
<div class="a t" style="left:1419.0px;top:1489.0px;width:800px;height:43px;line-height:43px;font-size:28.4px;color:#66686e;font-weight:400;text-align:center;">定时任务已经处于该状态，无需修改</div>
<div class="a t" style="left:2499.0px;top:1487.5px;width:400px;height:46px;line-height:46px;font-size:30.7px;color:#66686e;font-weight:400;text-align:center;">2021-04-20 23:52:56</div>
<svg class="a" style="left:2956px;top:1498.5px;" width="24" height="24" viewBox="0 0 24 24"><path d="M4 20l2-6L17 3l4 4L10 18z" stroke="#1890ff" stroke-width="2" fill="none"/><path d="M3 22h18" stroke="#1890ff" stroke-width="2"/></svg>
<div class="a t" style="left:2983.0px;top:1491.5px;width:2000px;height:38px;line-height:38px;font-size:25px;color:#1890ff;font-weight:400;text-align:left;">修改</div>
<svg class="a" style="left:3054px;top:1498.5px;" width="22" height="24" viewBox="0 0 22 24"><path d="M2 5h18M7 5V2h8v3M4 5v17h14V5M9 9v9M13 9v9" stroke="#1890ff" stroke-width="2" fill="none"/></svg>
<div class="a t" style="left:3080.0px;top:1491.5px;width:2000px;height:38px;line-height:38px;font-size:25px;color:#1890ff;font-weight:400;text-align:left;">删除</div>
<div class="a" style="left:432px;top:1656px;width:2768px;height:2px;background:#dfe2e8"></div>
<div class="a t" style="left:446.0px;top:1586.0px;width:300px;height:46px;line-height:46px;font-size:30.7px;color:#66686e;font-weight:400;text-align:center;">3947</div>
<div class="a t" style="left:690.5px;top:1587.5px;width:300px;height:43px;line-height:43px;font-size:28.4px;color:#66686e;font-weight:400;text-align:center;">自动生成</div>
<div class="a t" style="left:969.0px;top:1586.0px;width:300px;height:46px;line-height:46px;font-size:30.7px;color:#66686e;font-weight:400;text-align:center;">dashboard</div>
<div class="a t" style="left:1270.0px;top:1586.0px;width:300px;height:46px;line-height:46px;font-size:30.7px;color:#66686e;font-weight:400;text-align:center;">1001001004</div>
<div class="a t" style="left:1419.0px;top:1587.5px;width:800px;height:43px;line-height:43px;font-size:28.4px;color:#66686e;font-weight:400;text-align:center;">只有开启状态的任务，才可以修改</div>
<div class="a t" style="left:2499.0px;top:1586.0px;width:400px;height:46px;line-height:46px;font-size:30.7px;color:#66686e;font-weight:400;text-align:center;">2021-04-20 23:52:57</div>
<svg class="a" style="left:2956px;top:1597.0px;" width="24" height="24" viewBox="0 0 24 24"><path d="M4 20l2-6L17 3l4 4L10 18z" stroke="#1890ff" stroke-width="2" fill="none"/><path d="M3 22h18" stroke="#1890ff" stroke-width="2"/></svg>
<div class="a t" style="left:2983.0px;top:1590.0px;width:2000px;height:38px;line-height:38px;font-size:25px;color:#1890ff;font-weight:400;text-align:left;">修改</div>
<svg class="a" style="left:3054px;top:1597.0px;" width="22" height="24" viewBox="0 0 22 24"><path d="M2 5h18M7 5V2h8v3M4 5v17h14V5M9 9v9M13 9v9" stroke="#1890ff" stroke-width="2" fill="none"/></svg>
<div class="a t" style="left:3080.0px;top:1590.0px;width:2000px;height:38px;line-height:38px;font-size:25px;color:#1890ff;font-weight:400;text-align:left;">删除</div>
<div class="a" style="left:432px;top:1754px;width:2768px;height:2px;background:#dfe2e8"></div>
<div class="a t" style="left:446.0px;top:1684.0px;width:300px;height:46px;line-height:46px;font-size:30.7px;color:#66686e;font-weight:400;text-align:center;">3948</div>
<div class="a t" style="left:690.5px;top:1685.5px;width:300px;height:43px;line-height:43px;font-size:28.4px;color:#66686e;font-weight:400;text-align:center;">自动生成</div>
<div class="a t" style="left:969.0px;top:1684.0px;width:300px;height:46px;line-height:46px;font-size:30.7px;color:#66686e;font-weight:400;text-align:center;">dashboard</div>
<div class="a t" style="left:1270.0px;top:1684.0px;width:300px;height:46px;line-height:46px;font-size:30.7px;color:#66686e;font-weight:400;text-align:center;">1001001005</div>
<div class="a t" style="left:1419.0px;top:1685.5px;width:800px;height:43px;line-height:43px;font-size:28.4px;color:#66686e;font-weight:400;text-align:center;"><span class=l>CRON</span> 表达式不正确</div>
<div class="a t" style="left:2499.0px;top:1684.0px;width:400px;height:46px;line-height:46px;font-size:30.7px;color:#66686e;font-weight:400;text-align:center;">2021-04-20 23:52:57</div>
<svg class="a" style="left:2956px;top:1695.0px;" width="24" height="24" viewBox="0 0 24 24"><path d="M4 20l2-6L17 3l4 4L10 18z" stroke="#1890ff" stroke-width="2" fill="none"/><path d="M3 22h18" stroke="#1890ff" stroke-width="2"/></svg>
<div class="a t" style="left:2983.0px;top:1688.0px;width:2000px;height:38px;line-height:38px;font-size:25px;color:#1890ff;font-weight:400;text-align:left;">修改</div>
<svg class="a" style="left:3054px;top:1695.0px;" width="22" height="24" viewBox="0 0 22 24"><path d="M2 5h18M7 5V2h8v3M4 5v17h14V5M9 9v9M13 9v9" stroke="#1890ff" stroke-width="2" fill="none"/></svg>
<div class="a t" style="left:3080.0px;top:1688.0px;width:2000px;height:38px;line-height:38px;font-size:25px;color:#1890ff;font-weight:400;text-align:left;">删除</div>
<div class="a t" style="left:1802.0px;top:1819.0px;width:2000px;height:38px;line-height:38px;font-size:25.5px;color:#606266;font-weight:400;text-align:left;">共 76 条</div>
<div class="a" style="left:1930px;top:1810px;width:199px;height:55px;border:2px solid #dcdfe6;border-radius:6px;box-sizing:border-box;background:#fff"></div>
<div class="a t" style="left:1967.0px;top:1819.0px;width:2000px;height:38px;line-height:38px;font-size:25.5px;color:#606266;font-weight:400;text-align:left;">10条/页</div>
<svg class="a" style="left:2095px;top:1830px;" width="20" height="14" viewBox="0 0 20 14"><path d="M2 2l8 8 8-8" stroke="#c0c4cc" stroke-width="2" fill="none"/></svg>
<div class="a" style="left:2172.5px;top:1811px;width:55px;height:54px;background:#f6f6fa;border-radius:4px"></div>
<svg class="a" style="left:2191.5px;top:1826px;" width="16" height="24" viewBox="0 0 16 24"><path d="M12 2L4 12l8 10" stroke="#c0c4cc" stroke-width="2.4" fill="none"/></svg>
<div class="a" style="left:2252.75px;top:1811px;width:55px;height:54px;background:#1890ff;border-radius:4px"></div>
<div class="a t" style="left:2250.2px;top:1818.0px;width:60px;height:40px;line-height:40px;font-size:26.5px;color:#fff;font-weight:700;text-align:center;">1</div>
<div class="a" style="left:2333.0px;top:1811px;width:55px;height:54px;background:#f6f6fa;border-radius:4px"></div>
<div class="a t" style="left:2330.5px;top:1818.0px;width:60px;height:40px;line-height:40px;font-size:26.5px;color:#606266;font-weight:700;text-align:center;">2</div>
<div class="a" style="left:2413.25px;top:1811px;width:55px;height:54px;background:#f6f6fa;border-radius:4px"></div>
<div class="a t" style="left:2410.8px;top:1818.0px;width:60px;height:40px;line-height:40px;font-size:26.5px;color:#606266;font-weight:700;text-align:center;">3</div>
<div class="a" style="left:2493.5px;top:1811px;width:55px;height:54px;background:#f6f6fa;border-radius:4px"></div>
<div class="a t" style="left:2491.0px;top:1818.0px;width:60px;height:40px;line-height:40px;font-size:26.5px;color:#606266;font-weight:700;text-align:center;">4</div>
<div class="a" style="left:2573.75px;top:1811px;width:55px;height:54px;background:#f6f6fa;border-radius:4px"></div>
<div class="a t" style="left:2571.2px;top:1818.0px;width:60px;height:40px;line-height:40px;font-size:26.5px;color:#606266;font-weight:700;text-align:center;">5</div>
<div class="a" style="left:2654.0px;top:1811px;width:55px;height:54px;background:#f6f6fa;border-radius:4px"></div>
<div class="a t" style="left:2651.5px;top:1818.0px;width:60px;height:40px;line-height:40px;font-size:26.5px;color:#606266;font-weight:700;text-align:center;">6</div>
<div class="a" style="left:2734.25px;top:1811px;width:55px;height:54px;background:#f6f6fa;border-radius:4px"></div>
<svg class="a" style="left:2748.25px;top:1835px;" width="28" height="8" viewBox="0 0 28 8"><circle cx="6" cy="4" r="2.4" fill="#606266"/><circle cx="14" cy="4" r="2.4" fill="#606266"/><circle cx="22" cy="4" r="2.4" fill="#606266"/></svg>
<div class="a" style="left:2814.5px;top:1811px;width:55px;height:54px;background:#f6f6fa;border-radius:4px"></div>
<div class="a t" style="left:2812.0px;top:1818.0px;width:60px;height:40px;line-height:40px;font-size:26.5px;color:#606266;font-weight:700;text-align:center;">8</div>
<div class="a" style="left:2894.75px;top:1811px;width:55px;height:54px;background:#f6f6fa;border-radius:4px"></div>
<svg class="a" style="left:2915.75px;top:1826px;" width="16" height="24" viewBox="0 0 16 24"><path d="M4 2l8 10-8 10" stroke="#303133" stroke-width="2.4" fill="none"/></svg>
<div class="a t" style="left:3007.0px;top:1819.0px;width:2000px;height:38px;line-height:38px;font-size:25.5px;color:#606266;font-weight:400;text-align:left;">前往</div>
<div class="a" style="left:3068px;top:1810px;width:89px;height:55px;border:2px solid #dcdfe6;border-radius:6px;box-sizing:border-box;background:#fff"></div>
<div class="a t" style="left:3072.5px;top:1816.5px;width:80px;height:43px;line-height:43px;font-size:28.551000000000002px;color:#606266;font-weight:400;text-align:center;">1</div>
<div class="a t" style="left:3166.0px;top:1819.0px;width:2000px;height:38px;line-height:38px;font-size:25.5px;color:#606266;font-weight:400;text-align:left;">页</div>
<div class="a" style="left:3240px;top:68px;width:4px;height:1896px;background:#e4e3ee"></div>
<div class="a" style="left:3244px;top:176px;width:6px;height:1788px;background:#15131c"></div>
<div class="a" style="left:3240px;top:0px;width:2px;height:64px;background:#5c606c"></div>
<div class="a" style="left:3245px;top:0px;width:4px;height:64px;background:#1c1c24"></div>
<div class="a t" style="left:1462px;top:24px;width:600px;height:130px;line-height:130px;font-size:110px;color:#f03a62;transform:scaleX(0.970);transform-origin:0 0;text-shadow:0 0 2px #fff,0 0 3px #fff,2px 2px 2px #fff,-2px -2px 2px #fff,2px -2px 2px #fff,-2px 2px 2px #fff,0 3px 2px #fff,0 -3px 2px #fff,3px 0 2px #fff,-3px 0 2px #fff">错误码管理</div>
</body></html>
